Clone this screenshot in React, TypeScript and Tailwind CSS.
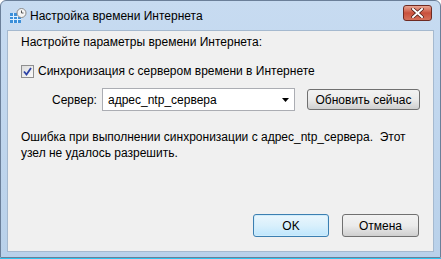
export default function App() {
  const font = { fontFamily: '"Liberation Sans", Arial, sans-serif' }
  return (
    <div className="w-[441px] h-[259px] overflow-hidden bg-white" style={font}>
      <div className="w-full h-[258px] flex flex-col bg-gradient-to-b from-[#c7dbf1] to-[#b9d1ea] border border-[#6b7f99] rounded-t-[6px]">
        {/* Title bar */}
        <div className="h-[29px] flex items-center shrink-0 pl-[8px] pr-[8px]">
          <svg width="18" height="16" viewBox="0 0 18 16" className="mr-[3px] mt-[1px]">
            <rect x="1" y="5" width="11" height="10" fill="#3b8fd9" />
            <g stroke="#dff0ff" strokeWidth="1">
              <line x1="1" y1="8.5" x2="12" y2="8.5" />
              <line x1="1" y1="11.5" x2="12" y2="11.5" />
              <line x1="4.5" y1="5" x2="4.5" y2="15" />
              <line x1="8.5" y1="5" x2="8.5" y2="15" />
            </g>
            <circle cx="12.5" cy="5" r="4.5" fill="#f4f4f4" stroke="#8a8a8a" />
            <path d="M12.5 2.5 V5 H14.5" stroke="#555" fill="none" strokeWidth="1" />
          </svg>
          <span className="text-[12px] text-black">Настройка времени Интернета</span>
          <div className="ml-auto mt-[-5px] w-[29px] h-[16px] rounded-[3px] border border-[#6e2a22] bg-gradient-to-b from-[#e8a593] via-[#c9503c] to-[#d5705a] flex items-center justify-center">
            <svg width="13" height="10" viewBox="0 0 13 10">
              <path d="M2 1 L11 9 M11 1 L2 9" stroke="#4a1a14" strokeWidth="3.4" strokeLinecap="square" />
              <path d="M2 1 L11 9 M11 1 L2 9" stroke="#ffffff" strokeWidth="2" strokeLinecap="square" />
            </svg>
          </div>
        </div>

        {/* Client area */}
        <div className="mx-[6px] flex-1 bg-[#f0f0f0] border border-[#a5b9cf] flex flex-col pl-[13px] pr-[13px] text-[12px] text-black">
          <div className="mt-[4px] h-[15px] leading-[15px]">Настройте параметры времени Интернета:</div>

          <div className="mt-[14px] flex items-center h-[15px]">
            <div className="w-[13px] h-[13px] border border-[#8f8f8f] bg-gradient-to-br from-[#dcdcdc] to-[#fbfbfb] flex items-center justify-center p-[1px]">
              <svg width="9" height="9" viewBox="0 0 9 9">
                <path d="M1 4.5 L3.5 7.5 L8 1" stroke="#2d43a6" strokeWidth="1.8" fill="none" />
              </svg>
            </div>
            <span className="ml-[4px] leading-[15px]">Синхронизация с сервером времени в Интернете</span>
          </div>

          <div className="mt-[9px] flex items-center">
            <span className="ml-[31px] w-[50px]">Сервер:</span>
            <div className="w-[193px] h-[23px] bg-white border border-[#abadb3] flex items-center pl-[5px] pr-[4px]">
              <span>адрес_ntp_сервера</span>
              <svg width="7" height="4" viewBox="0 0 7 4" className="ml-auto mr-[1px]">
                <path d="M0 0 H7 L3.5 4 Z" fill="#000" />
              </svg>
            </div>
            <div className="ml-[12px] w-[113px] h-[21px] rounded-[3px] border border-[#707070] bg-gradient-to-b from-[#f2f2f2] via-[#ebebeb] to-[#cfcfcf] flex items-center justify-center">
              Обновить сейчас
            </div>
          </div>

          <div className="mt-[18px] leading-[16px] w-[400px]">
            Ошибка при выполнении синхронизации с адрес_ntp_сервера.&nbsp; Этот узел не удалось разрешить.
          </div>

          <div className="mt-auto mb-[14px] flex justify-end gap-[13px] pr-[1px]">
            <div className="w-[76px] h-[23px] rounded-[3px] border border-[#3c7fb1] bg-gradient-to-b from-[#eaf6fd] via-[#d9f0fc] to-[#bee6fd] flex items-center justify-center shadow-[inset_0_0_0_1px_#d0ecfb]">
              OK
            </div>
            <div className="w-[77px] h-[23px] rounded-[3px] border border-[#707070] bg-gradient-to-b from-[#f2f2f2] via-[#ebebeb] to-[#cfcfcf] flex items-center justify-center">
              Отмена
            </div>
          </div>
        </div>
        <div className="h-[5px] shrink-0" />
      </div>
      <div className="h-[1px] bg-[#2ec6f0]" />
    </div>
  )
}
